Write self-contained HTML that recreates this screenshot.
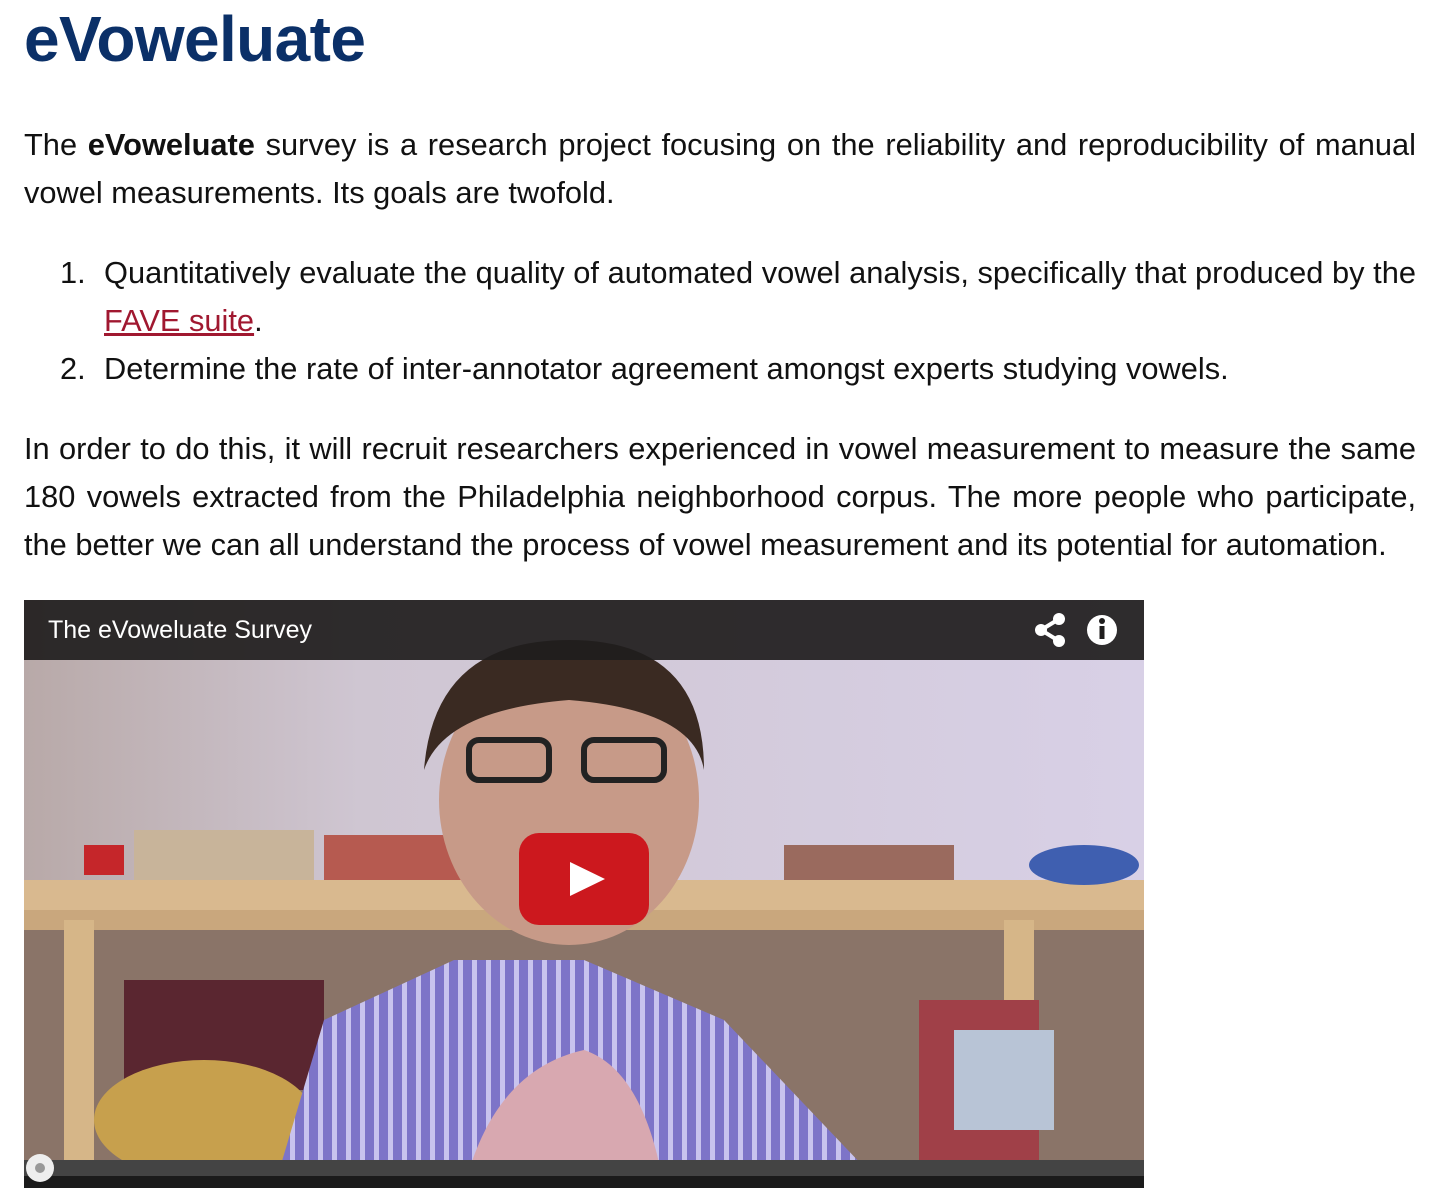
<!DOCTYPE html>
<html><head><meta charset="utf-8"><style>
html,body{margin:0;padding:0;background:#fff;width:1438px;height:1188px;overflow:hidden}
body{font-family:"Liberation Sans",Arial,sans-serif;color:#111}
.wrap{position:absolute;left:24px;top:0;width:1392px}
h1{margin:0;position:absolute;top:7px;left:0;font-size:64px;line-height:64px;color:#0b3068;font-weight:bold;letter-spacing:-0.6px}
p{margin:0;font-size:30.8px;line-height:48px;text-align:justify;position:absolute;left:0;width:1392px}
ol{margin:0;padding:0;list-style:none;position:absolute;left:0;top:249px;width:1392px;font-size:30.8px;line-height:48px}
ol li{position:relative;padding-left:80px;text-align:justify}
ol li span.n{position:absolute;left:36px}
a{color:#a01830;text-decoration:underline}
.video{position:absolute;left:24px;top:600px;width:1120px;height:588px;overflow:hidden;background:#c9c4d6}
</style></head><body>
<div class="wrap">
<h1>eVoweluate</h1>
<p style="top:121px">The <b>eVoweluate</b> survey is a research project focusing on the reliability and reproducibility of manual vowel measurements. Its goals are twofold.</p>
<ol>
<li><span class="n">1.</span>Quantitatively evaluate the quality of automated vowel analysis, specifically that produced by the <a>FAVE suite</a>.</li>
<li><span class="n">2.</span>Determine the rate of inter-annotator agreement amongst experts studying vowels.</li>
</ol>
<p style="top:425px">In order to do this, it will recruit researchers experienced in vowel measurement to measure the same 180 vowels extracted from the Philadelphia neighborhood corpus. The more people who participate, the better we can all understand the process of vowel measurement and its potential for automation.</p>
</div>
<div class="video">
<svg width="1120" height="588" viewBox="0 0 1120 588" style="position:absolute;left:0;top:0">
<defs>
<linearGradient id="wall" x1="0" y1="0" x2="1" y2="0"><stop offset="0" stop-color="#b8a9a8"/><stop offset="0.3" stop-color="#cfc6d2"/><stop offset="1" stop-color="#d8d0e6"/></linearGradient>
<pattern id="str" width="14" height="10" patternUnits="userSpaceOnUse"><rect width="14" height="10" fill="#7d74c8"/><rect width="5" height="10" fill="#c8c3ee"/></pattern>
</defs>
<rect width="1120" height="588" fill="url(#wall)"/>
<rect x="0" y="280" width="1120" height="30" fill="#d9b98f"/>
<rect x="0" y="310" width="1120" height="250" fill="#8a7468"/>
<rect x="0" y="310" width="1120" height="20" fill="#c9a77d"/>
<rect x="40" y="320" width="30" height="240" fill="#d6b688"/>
<rect x="980" y="320" width="30" height="240" fill="#d6b688"/>
<rect x="110" y="230" width="180" height="50" fill="#c8b49a"/>
<rect x="300" y="235" width="150" height="45" fill="#b65a50"/>
<rect x="60" y="245" width="40" height="30" fill="#c5262a"/>
<rect x="760" y="245" width="170" height="35" fill="#9a6a5e"/>
<ellipse cx="1060" cy="265" rx="55" ry="20" fill="#3f5fb0"/>
<rect x="100" y="380" width="200" height="110" fill="#5a2630"/>
<ellipse cx="180" cy="520" rx="110" ry="60" fill="#c7a04d"/>
<path d="M250 588 L300 420 L430 360 L560 360 L700 420 L860 588 Z" fill="url(#str)"/>
<ellipse cx="545" cy="200" rx="130" ry="145" fill="#c79a88"/>
<path d="M400 170 Q410 40 545 40 Q680 40 680 170 Q670 110 545 100 Q420 110 400 170Z" fill="#3a2a22"/>
<rect x="445" y="140" width="80" height="40" rx="10" fill="none" stroke="#222" stroke-width="6"/>
<rect x="560" y="140" width="80" height="40" rx="10" fill="none" stroke="#222" stroke-width="6"/>
<path d="M440 588 Q470 470 560 450 Q620 470 640 588Z" fill="#d8a8b0"/>
<rect x="895" y="400" width="120" height="160" fill="#a04048"/>
<rect x="930" y="430" width="100" height="100" fill="#b8c4d6"/>
<rect x="0" y="0" width="1120" height="60" fill="#1f1d1d" opacity="0.92"/>
<rect x="495" y="233" width="130" height="92" rx="20" fill="#cc181e"/>
<path d="M546 262 L546 296 L581 279 Z" fill="#fff"/>
<g fill="#fff"><circle cx="1017" cy="30" r="6"/><circle cx="1035" cy="19" r="6"/><circle cx="1035" cy="41" r="6"/></g>
<path d="M1017 30 L1035 19 M1017 30 L1035 41" stroke="#fff" stroke-width="4"/>
<circle cx="1078" cy="30" r="15" fill="#fff"/>
<rect x="1075.5" y="26" width="5" height="13" fill="#1f1d1d"/><circle cx="1078" cy="21" r="3" fill="#1f1d1d"/>
<text x="24" y="38" font-family="Liberation Sans, Arial, sans-serif" font-size="25" fill="#fff">The eVoweluate Survey</text>
<rect x="0" y="560" width="1120" height="16" fill="#444"/>
<rect x="0" y="576" width="1120" height="12" fill="#1b1b1b"/>
<circle cx="16" cy="568" r="14" fill="#eee"/><circle cx="16" cy="568" r="5" fill="#999"/>
</svg>
</div>
</body></html>
